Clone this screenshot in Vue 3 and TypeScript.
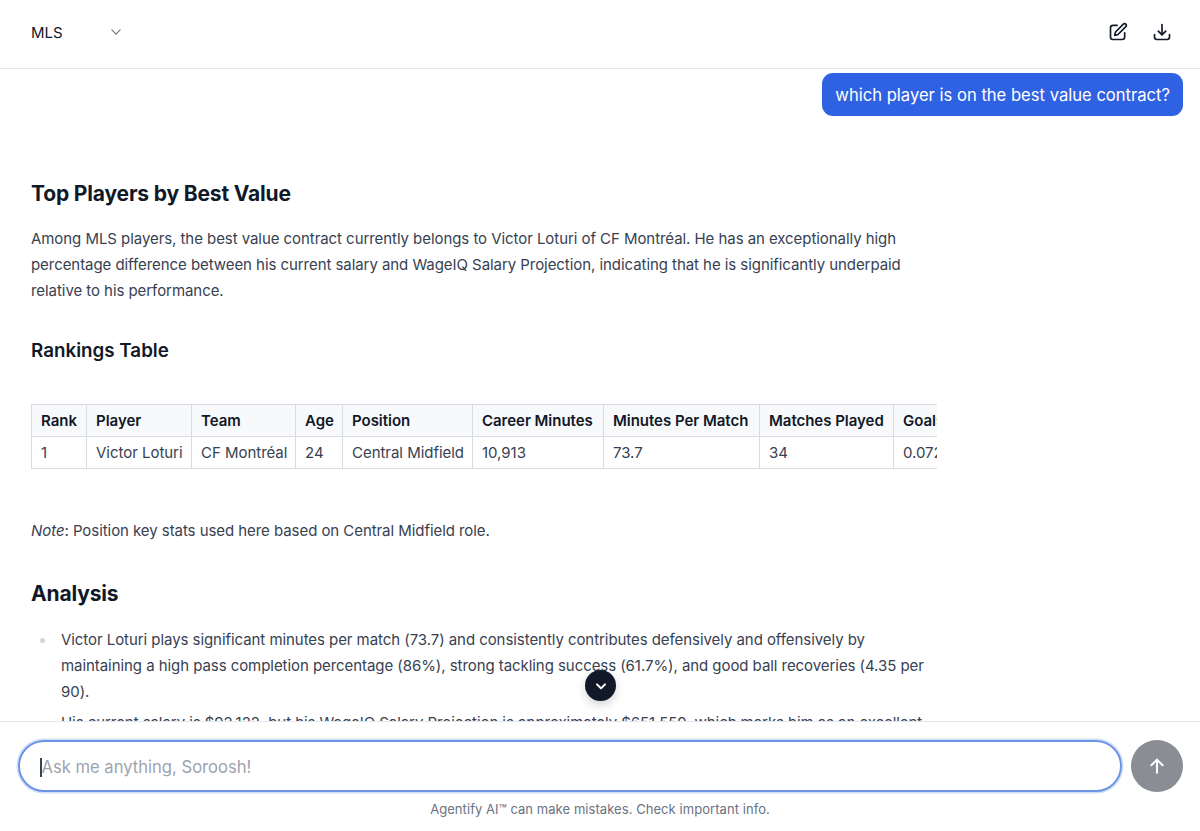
<script setup lang="ts">
interface Col { label: string; value: string; w: number }
const cols: Col[] = [
  { label: 'Rank', value: '1', w: 55 },
  { label: 'Player', value: 'Victor Loturi', w: 105 },
  { label: 'Team', value: 'CF Montréal', w: 104 },
  { label: 'Age', value: '24', w: 47 },
  { label: 'Position', value: 'Central Midfield', w: 130 },
  { label: 'Career Minutes', value: '10,913', w: 131 },
  { label: 'Minutes Per Match', value: '73.7', w: 156 },
  { label: 'Matches Played', value: '34', w: 134 },
  { label: 'Goals Per 90', value: '0.072', w: 110 }
]
</script>

<template>
  <div class="page">
    <header class="top">
      <div class="select">
        <span>MLS</span>
        <svg class="chev" width="14" height="14" viewBox="0 0 24 24" fill="none" stroke="#6b7280" stroke-width="2" stroke-linecap="round" stroke-linejoin="round"><path d="M5 8.5l7 7 7-7" /></svg>
      </div>
      <div class="actions">
        <svg width="20" height="20" viewBox="0 0 24 24" fill="none" stroke="#111827" stroke-width="2" stroke-linecap="round" stroke-linejoin="round"><path d="M11 4H6a3 3 0 0 0-3 3v11a3 3 0 0 0 3 3h11a3 3 0 0 0 3-3v-5" /><path d="M18.4 2.6a2.1 2.1 0 0 1 3 3L12 15l-4 1 1-4z" /></svg>
        <svg width="20" height="20" viewBox="0 0 24 24" fill="none" stroke="#111827" stroke-width="2" stroke-linecap="round" stroke-linejoin="round"><path d="M3 15v3a3 3 0 0 0 3 3h12a3 3 0 0 0 3-3v-3" /><path d="M7.5 11l4.500 4.500 4.500-4.500" /><path d="M12 3v12" /></svg>
      </div>
    </header>

    <main class="chat">
      <div class="user-row"><div class="bubble">which player is on the best value contract?</div></div>
      <article class="prose">
        <h2 class="h-first">Top Players by Best Value</h2>
        <p>Among MLS players, the best value contract currently belongs to Victor Loturi of CF Montréal. He has an exceptionally high percentage difference between his current salary and WageIQ Salary Projection, indicating that he is significantly underpaid relative to his performance.</p>
        <h3>Rankings Table</h3>
        <div class="table-wrap">
          <table>
            <colgroup><col v-for="c in cols" :key="c.label" :style="{ width: c.w + 'px' }" /></colgroup>
            <thead><tr><th v-for="c in cols" :key="c.label">{{ c.label }}</th></tr></thead>
            <tbody><tr><td v-for="c in cols" :key="c.label">{{ c.value }}</td></tr></tbody>
          </table>
        </div>
        <p class="note"><em>Note</em>: Position key stats used here based on Central Midfield role.</p>
        <h2 class="h-analysis">Analysis</h2>
        <ul>
          <li>Victor Loturi plays significant minutes per match (73.7) and consistently contributes defensively and offensively by maintaining a high pass completion percentage (86%), strong tackling success (61.7%), and good ball recoveries (4.35 per 90).</li>
          <li>His current salary is $92,122, but his WageIQ Salary Projection is approximately $651,559, which marks him as an excellent value signing for his club and league.</li>
        </ul>
      </article>
      <button class="scroll-btn" aria-label="Scroll to bottom">
        <svg width="16" height="16" viewBox="0 0 24 24" fill="none" stroke="#fff" stroke-width="3" stroke-linecap="round" stroke-linejoin="round"><path d="M6 9.500l6 6 6-6" /></svg>
      </button>
    </main>

    <footer class="bottom">
      <div class="composer">
        <div class="field"><span class="caret"></span><span class="ph">Ask me anything, Soroosh!</span></div>
        <button class="send" aria-label="Send">
          <svg width="18" height="18" viewBox="0 0 24 24" fill="none" stroke="#fff" stroke-width="2.6" stroke-linecap="round" stroke-linejoin="round"><path d="M12 21V3.500" /><path d="M4.500 11L12 3.500 19.500 11" /></svg>
        </button>
      </div>
      <p class="disclaimer">Agentify AI™ can make mistakes. Check important info.</p>
    </footer>
  </div>
</template>

<style>
html, body { margin: 0; background: #fff; }
</style>

<style scoped>
.page {
  width: 1200px;
  height: 831px;
  display: flex;
  flex-direction: column;
  overflow: hidden;
  font-family: Inter, "Liberation Sans", sans-serif;
  color: #374151;
  font-size: 15px;
  letter-spacing: -0.06px;
}
.top {
  flex: none;
  height: 68px;
  box-sizing: content-box;
  border-bottom: 1px solid #e5e7eb;
  display: flex;
  align-items: center;
  justify-content: space-between;
  padding: 0 28px 0 31px;
  color: #111827;
}
.select { display: flex; align-items: center; width: 92px; justify-content: space-between; font-size: 15px; letter-spacing: 0; padding-bottom: 4px; }
.actions { display: flex; gap: 24px; align-items: center; padding-bottom: 4px; }
.chat { position: relative; flex: 1; min-height: 0; overflow: hidden; }
.user-row { display: flex; justify-content: flex-end; padding: 4px 17px 0 0; }
.bubble {
  background: #2f62e3;
  color: #fff;
  border-radius: 11px;
  padding: 0 13px;
  height: 43px;
  line-height: 44px;
  font-size: 16.6px;
  letter-spacing: 0;
}
.prose { width: 906px; margin-left: 31px; line-height: 26px; }
h2, h3 { margin: 0; color: #111827; font-weight: 700; }
h2 { font-size: 21px; line-height: 30px; letter-spacing: -0.16px; }
.h-first { margin-top: 63px; }
h3 { font-size: 18.8px; line-height: 28px; font-weight: 600; margin-top: 33px; letter-spacing: 0; }
p { margin: 0; }
.prose > p:first-of-type { margin-top: 17px; }
.table-wrap { margin-top: 39px; overflow: hidden; width: 906px; }
table { border-collapse: collapse; table-layout: fixed; width: 872px; }
th, td { border: 1px solid #d9dce3; padding: 1px 9px 0; height: 30px; text-align: left; white-space: nowrap; line-height: 20px; overflow: visible; letter-spacing: -0.03px; }
th { background: #f8f9fb; color: #111827; font-weight: 600; }
.note { margin-top: 49px; }
.h-analysis { margin-top: 35px; }
ul { margin: 18px 0 0; padding: 0 0 0 30px; list-style: none; }
li { position: relative; margin-bottom: 5px; }
li::before { content: ""; position: absolute; left: -21px; top: 11px; width: 5px; height: 5px; border-radius: 50%; background: #d1d5db; }
.scroll-btn {
  position: absolute;
  left: 585px;
  top: 601px;
  width: 31px;
  height: 31px;
  border: none;
  border-radius: 50%;
  background: #111827;
  padding: 0;
  display: flex;
  align-items: center;
  justify-content: center;
  box-shadow: 0 4px 10px rgba(17, 24, 39, 0.18);
}
.bottom { flex: none; height: 110px; border-top: 1px solid #e5e7eb; box-sizing: border-box; background: #fff; }
.composer { display: flex; gap: 9px; padding: 18px 17px 0 18px; align-items: flex-start; }
.field {
  flex: 1;
  height: 52px;
  box-sizing: border-box;
  border: 2px solid #6d93e6;
  border-radius: 26px;
  box-shadow: 0 0 0 1.500px #cfdff8;
  display: flex;
  align-items: center;
  padding: 2px 0 0 20px;
  font-size: 16.6px;
  letter-spacing: 0;
}
.caret { width: 1.500px; height: 19px; background: #374151; flex: none; }
.ph { color: #9ca3af; }
.send {
  flex: none;
  width: 52px;
  height: 52px;
  border: none;
  padding: 0;
  border-radius: 50%;
  background: #8a8d94;
  display: flex;
  align-items: center;
  justify-content: center;
}
.disclaimer { margin-top: 8px; text-align: center; font-size: 13px; line-height: 18px; color: #6b7280; letter-spacing: 0.06px; }
</style>
